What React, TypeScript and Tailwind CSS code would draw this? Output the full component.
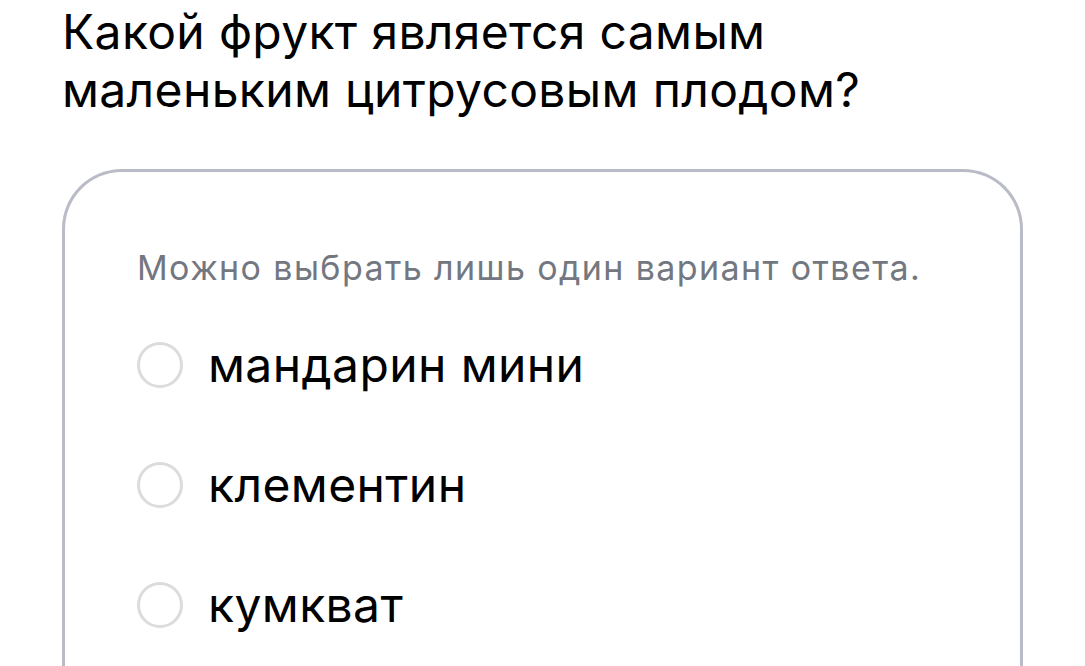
import React, { useState } from 'react';

const OPTIONS = ['мандарин мини', 'клементин', 'кумкват'];

const App: React.FC = () => {
  const [selected, setSelected] = useState<number | null>(null);

  return (
    <div
      className="h-[666px] w-full overflow-hidden bg-white text-black"
      style={{ fontFamily: 'Inter, "Noto Sans", sans-serif' }}
    >
      <div className="px-[62px] pt-[3px]">
        <h1 className="text-[48px] leading-[58px] font-normal tracking-[0.35px]">
          Какой фрукт является самым
          <br />
          маленьким цитрусовым плодом?
        </h1>

        <div className="mt-[50px] rounded-t-[60px] border-[3px] border-b-0 border-[#b9bcc7] px-[72px] pt-[76px] pb-10">
          <p className="text-[34px] leading-[40px] tracking-[1.4px] text-[#737780]">
            Можно выбрать лишь один вариант ответа.
          </p>

          <div className="mt-[44px] flex flex-col gap-[54px]">
            {OPTIONS.map((opt, i) => (
              <button
                key={opt}
                onClick={() => setSelected(i)}
                className="flex items-center gap-[25px] text-left"
              >
                <span className="flex h-[46px] w-[46px] shrink-0 items-center justify-center rounded-full border-[3px] border-[#dcdcdc]">
                  {selected === i && <span className="h-5 w-5 rounded-full bg-black" />}
                </span>
                <span className="text-[48px] leading-[66px] tracking-[0.4px]">{opt}</span>
              </button>
            ))}
          </div>
        </div>
      </div>
    </div>
  );
};

export default App;
